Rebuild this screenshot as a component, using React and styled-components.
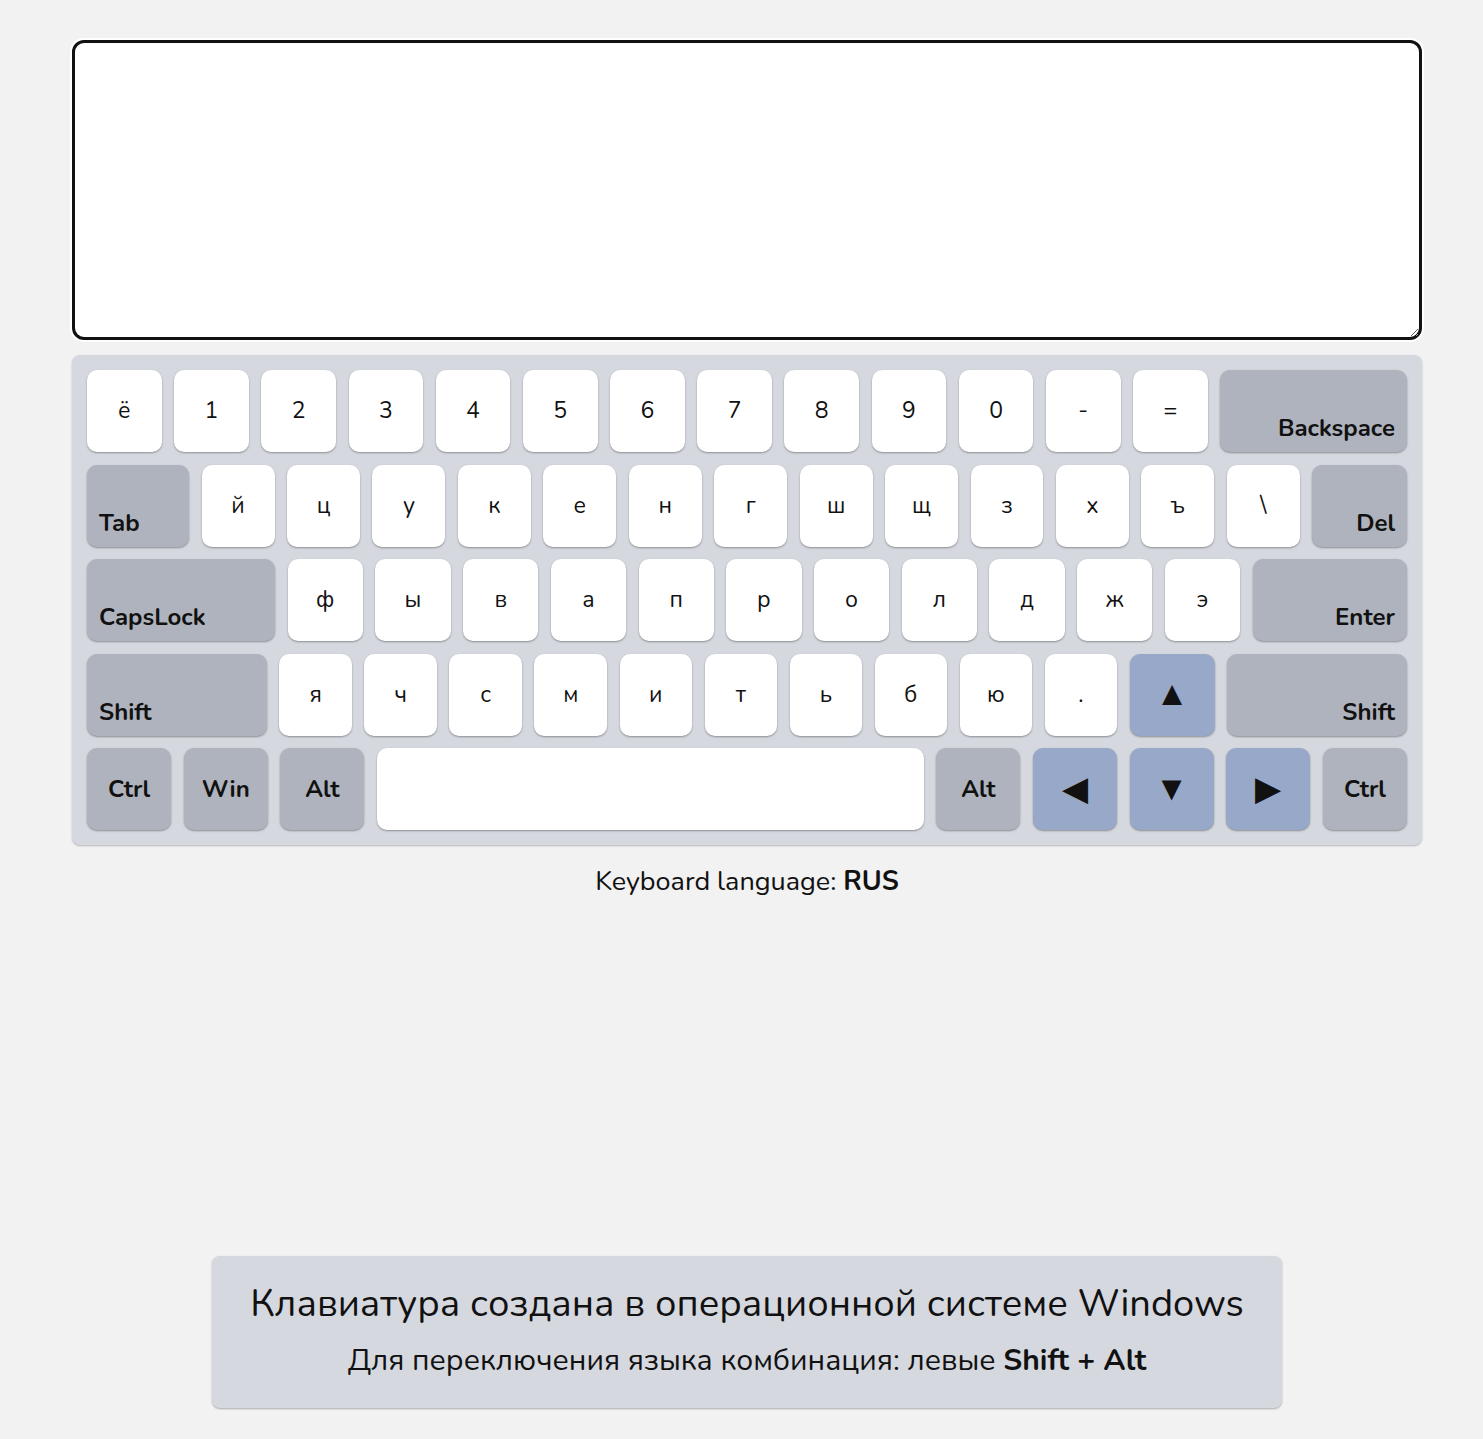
import React from 'react';
import styled, { createGlobalStyle } from 'styled-components';

const GlobalStyle = createGlobalStyle`
  html, body {
    margin: 0;
    padding: 0;
    background: #f2f2f2;
  }
  body {
    font-family: 'Nunito', 'Open Sans', 'Noto Sans', sans-serif;
    color: #111;
  }
`;

const Page = styled.div`
  min-height: 100vh;
  display: flex;
  flex-direction: column;
  align-items: center;
  padding: 40px 0 31px 11px;
  box-sizing: border-box;
`;

const Container = styled.div`
  width: 1350px;
  display: flex;
  flex-direction: column;
  gap: 15px;
`;

const TextArea = styled.textarea`
  width: 100%;
  height: 300px;
  box-sizing: border-box;
  border: 3px solid #111;
  border-radius: 12px;
  box-shadow: 0 0 0 2px #fff;
  background: #fff;
  padding: 12px 14px;
  font-family: inherit;
  font-size: 26px;
  outline: none;
  display: block;
`;

const Keyboard = styled.div`
  background: #d5d8df;
  border-radius: 8px;
  padding: 15px;
  display: flex;
  flex-direction: column;
  gap: 12.5px;
  box-shadow: 0 1px 2px rgba(0, 0, 0, 0.25);
`;

const Row = styled.div`
  display: flex;
  gap: 12.5px;
  height: 82px;
`;

const colors = {
  char: '#ffffff',
  func: '#afb3bd',
  arrow: '#98a8c8',
};

const sizes = {
  char: '23px',
  func: '24px',
  arrow: '34px',
};

const Key = styled.div`
  flex: ${p => p.$grow || 1} 1 0;
  min-width: 0;
  background: ${p => colors[p.$kind]};
  border-radius: 10px;
  box-shadow: 0 1px 2px rgba(0, 0, 0, 0.35);
  display: flex;
  align-items: ${p => (p.$align ? 'flex-end' : 'center')};
  justify-content: ${p =>
    p.$align === 'left' ? 'flex-start' : p.$align === 'right' ? 'flex-end' : 'center'};
  font-size: ${p => sizes[p.$kind]};
  font-weight: ${p => (p.$kind === 'func' ? 700 : 400)};
  user-select: none;
  white-space: nowrap;
`;

const KeyLabel = styled.span`
  margin: ${p => (p.$align ? '0 12px 9px' : '0')};
  line-height: 1.2;
`;

const Lang = styled.p`
  margin: 4px 0 0;
  text-align: center;
  font-size: 27px;
  line-height: 36px;
  b {
    font-weight: 700;
  }
`;

const Info = styled.div`
  margin-top: auto;
  width: 1070px;
  box-sizing: border-box;
  background: #d5d8df;
  border-radius: 8px;
  box-shadow: 0 1px 2px rgba(0, 0, 0, 0.3);
  padding: 24px 10px 27px;
  text-align: center;
`;

const InfoTitle = styled.h2`
  margin: 0;
  font-size: 38px;
  font-weight: 400;
  line-height: 48px;
`;

const InfoText = styled.p`
  margin: 13px 0 0;
  font-size: 30px;
  line-height: 40px;
  b {
    font-weight: 700;
  }
`;

const chars = s => s.split('').map(c => ({ label: c, kind: 'char' }));

const rows = [
  [...chars('ё1234567890-='), { label: 'Backspace', kind: 'func', grow: 2.5, align: 'right' }],
  [
    { label: 'Tab', kind: 'func', grow: 1.4, align: 'left' },
    ...chars('йцукенгшщзхъ\\'),
    { label: 'Del', kind: 'func', grow: 1.3, align: 'right' },
  ],
  [
    { label: 'CapsLock', kind: 'func', grow: 2.5, align: 'left' },
    ...chars('фывапролджэ'),
    { label: 'Enter', kind: 'func', grow: 2.05, align: 'right' },
  ],
  [
    { label: 'Shift', kind: 'func', grow: 2.48, align: 'left' },
    ...chars('ячсмитьбю.'),
    { label: '▲', kind: 'arrow', grow: 1.17 },
    { label: 'Shift', kind: 'func', grow: 2.48, align: 'right' },
  ],
  [
    { label: 'Ctrl', kind: 'func' },
    { label: 'Win', kind: 'func' },
    { label: 'Alt', kind: 'func' },
    { label: '', kind: 'char', grow: 6.5 },
    { label: 'Alt', kind: 'func' },
    { label: '◀', kind: 'arrow' },
    { label: '▼', kind: 'arrow' },
    { label: '▶', kind: 'arrow' },
    { label: 'Ctrl', kind: 'func' },
  ],
];

export default function App() {
  return (
    <>
      <GlobalStyle />
      <Page>
        <Container>
          <TextArea autoFocus />
          <Keyboard>
            {rows.map((row, i) => (
              <Row key={i}>
                {row.map((k, j) => (
                  <Key key={j} $kind={k.kind} $grow={k.grow} $align={k.align}>
                    <KeyLabel $align={k.align}>{k.label}</KeyLabel>
                  </Key>
                ))}
              </Row>
            ))}
          </Keyboard>
          <Lang>
            Keyboard language: <b>RUS</b>
          </Lang>
        </Container>
        <Info>
          <InfoTitle>Клавиатура создана в операционной системе Windows</InfoTitle>
          <InfoText>
            Для переключения языка комбинация: левые <b>Shift + Alt</b>
          </InfoText>
        </Info>
      </Page>
    </>
  );
}
